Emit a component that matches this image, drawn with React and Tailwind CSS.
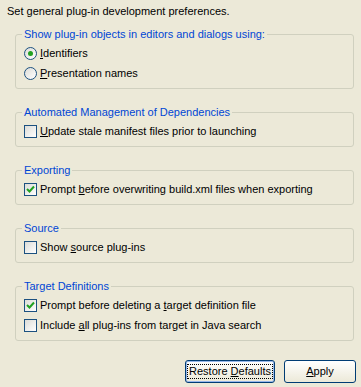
const font = { fontFamily: '"Liberation Sans", Arial, sans-serif' };

function Mn({ children }) {
  return <span className="underline underline-offset-[1px]">{children}</span>;
}

function Radio({ checked, children }) {
  return (
    <div className="flex items-center h-5 pl-2">
      <span className="w-[13px] h-[13px] rounded-full border border-[#1c5180] bg-gradient-to-br from-[#dcdcd7] to-white flex items-center justify-center">
        {checked && <span className="w-[5px] h-[5px] rounded-full bg-[#21a121]" />}
      </span>
      <span className="ml-[3px]">{children}</span>
    </div>
  );
}

function Check({ checked, children }) {
  return (
    <div className="flex items-center h-5 pl-2">
      <span className="w-[13px] h-[13px] border border-[#1c5180] bg-gradient-to-br from-[#dcdcd7] to-white flex items-center justify-center">
        {checked && (
          <svg width="9" height="9" viewBox="0 0 9 9">
            <path d="M1 4 L3.5 6.5 L8 1.5" fill="none" stroke="#21a121" strokeWidth="2" />
          </svg>
        )}
      </span>
      <span className="ml-[3px]">{children}</span>
    </div>
  );
}

function Group({ title, children }) {
  return (
    <fieldset className="border border-[#d0d0bf] rounded-[3px] px-0 pb-[5px] pt-[2px]">
      <legend className="ml-[6px] px-[2px] text-[#0046d5] leading-[13px]">{title}</legend>
      {children}
    </fieldset>
  );
}

export default function App() {
  return (
    <div className="w-[361px] h-[387px] bg-[#ece9d8] text-[11px] text-black leading-[13px] overflow-hidden" style={font}>
      <div className="pl-[7px] pt-[5px]">Set general plug-in development preferences.</div>
      <div className="flex flex-col gap-[17px] ml-[15px] w-[339px] mt-[10px]">
        <Group title="Show plug-in objects in editors and dialogs using:">
          <Radio checked><Mn>I</Mn>dentifiers</Radio>
          <Radio><Mn>P</Mn>resentation names</Radio>
        </Group>
        <Group title="Automated Management of Dependencies">
          <Check><Mn>U</Mn>pdate stale manifest files prior to launching</Check>
        </Group>
        <Group title="Exporting">
          <Check checked>Prompt <Mn>b</Mn>efore overwriting build.xml files when exporting</Check>
        </Group>
        <Group title="Source">
          <Check>Show <Mn>s</Mn>ource plug-ins</Check>
        </Group>
        <Group title="Target Definitions">
          <Check checked>Prompt before deleting a <Mn>t</Mn>arget definition file</Check>
          <Check>Include <Mn>a</Mn>ll plug-ins from target in Java search</Check>
        </Group>
      </div>
      <div className="flex justify-end gap-[9px] pr-[5px] mt-[19px]">
        <button className="w-[90px] h-[23px] rounded-[3px] border border-[#003c74] bg-gradient-to-b from-white to-[#ece9d8] shadow-[inset_0_0_0_1px_#98b8ea] flex items-center justify-center">
          <span className="outline-1 outline-dotted outline-black px-[1px]">Restore <Mn>D</Mn>efaults</span>
        </button>
        <button className="w-[72px] h-[23px] rounded-[3px] border border-[#003c74] bg-gradient-to-b from-white to-[#ece9d8]">
          <Mn>A</Mn>pply
        </button>
      </div>
    </div>
  );
}
